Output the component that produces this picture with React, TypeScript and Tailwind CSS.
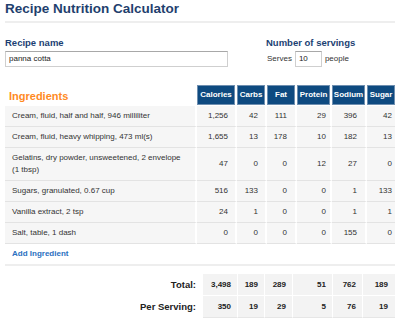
const cols = [
  { label: "Calories", pr: "pr-[7px]" },
  { label: "Carbs", pr: "pr-[7px]" },
  { label: "Fat", pr: "pr-[8px]" },
  { label: "Protein", pr: "pr-[4px]" },
  { label: "Sodium", pr: "pr-[8px]" },
  { label: "Sugar", pr: "pr-[3px]" },
];

const ingredients = [
  { name: "Cream, fluid, half and half, 946 milliliter", values: ["1,256", "42", "111", "29", "396", "42"] },
  { name: "Cream, fluid, heavy whipping, 473 ml(s)", values: ["1,655", "13", "178", "10", "182", "13"] },
  { name: "Gelatins, dry powder, unsweetened, 2 envelope (1 tbsp)", values: ["47", "0", "0", "12", "27", "0"] },
  { name: "Sugars, granulated, 0.67 cup", values: ["516", "133", "0", "0", "1", "133"] },
  { name: "Vanilla extract, 2 tsp", values: ["24", "1", "0", "0", "1", "1"] },
  { name: "Salt, table, 1 dash", values: ["0", "0", "0", "0", "155", "0"] },
];

const totals = [
  { label: "Total:", values: ["3,498", "189", "289", "51", "762", "189"] },
  { label: "Per Serving:", values: ["350", "19", "29", "5", "76", "19"] },
];

const totalPads = ["pr-[6px]", "pr-[6px]", "pr-[6px]", "pr-[6px]", "pr-[6px]", "pr-[7px]"];

function Header() {
  return (
    <div className="h-[23px] border-b-2 border-[#eeeeee] pt-[1px]">
      <h1 className="text-[13.5px] leading-[16px] font-bold text-[#1f3f6e]">Recipe Nutrition Calculator</h1>
    </div>
  );
}

function RecipeFields() {
  return (
    <div className="flex mt-[14px]">
      <div className="w-[223px]">
        <label className="block text-[9.5px] leading-[11px] font-bold text-[#1c3f73] mb-[3px]">Recipe name</label>
        <div className="h-[16px] border border-[#cfcfcf] border-t-[#a8a8a8] pl-[3px] text-[8px] leading-[14px] text-[#222]">
          panna cotta
        </div>
      </div>
      <div className="ml-[38px]">
        <label className="block text-[9.5px] leading-[11px] font-bold text-[#1c3f73] mb-[3px]">Number of servings</label>
        <div className="flex items-center h-[16px] text-[8px] text-[#333]">
          <span className="pl-[1px]">Serves</span>
          <div className="ml-[3px] w-[27px] h-[16px] border border-[#cfcfcf] border-t-[#a8a8a8] pl-[3px] text-[8px] leading-[14px] text-[#222]">
            10
          </div>
          <span className="ml-[3px]">people</span>
        </div>
      </div>
    </div>
  );
}

function IngredientsTable() {
  return (
    <table className="mt-[18px] w-[390px] table-fixed border-separate border-spacing-0 text-[8px] leading-[12px] text-[#333]">
      <colgroup>
        <col className="w-[192px]" />
        <col className="w-[40px]" />
        <col className="w-[30px]" />
        <col className="w-[30px]" />
        <col className="w-[35px]" />
        <col className="w-[35px]" />
        <col className="w-[28px]" />
      </colgroup>
      <thead>
        <tr>
          <th className="h-[21px] text-left align-middle pl-[4px] text-[11px] font-bold text-[#ff8a1f] border-r-2 border-white">
            Ingredients
          </th>
          {cols.map((c, i) => (
            <th
              key={c.label}
              className={`h-[21px] bg-[#0e4a80] text-white font-bold text-center align-middle shadow-[inset_0_0_0_1px_#6f8fb0] border-b border-white ${
                i < cols.length - 1 ? "border-r-2" : ""
              }`}
            >
              {c.label}
            </th>
          ))}
        </tr>
      </thead>
      <tbody>
        {ingredients.map((row) => (
          <tr key={row.name}>
            <td className="bg-[#f6f6f6] pl-[7px] pr-[8px] py-[4px] border-b border-[#e3e3e3] border-r-2 border-r-white align-middle">
              {row.name}
            </td>
            {row.values.map((v, i) => (
              <td
                key={i}
                className={`bg-[#f6f6f6] text-right py-[4px] border-b border-[#e3e3e3] align-middle ${cols[i].pr} ${
                  i < row.values.length - 1 ? "border-r-2 border-r-white" : ""
                }`}
              >
                {v}
              </td>
            ))}
          </tr>
        ))}
        <tr>
          <td colSpan={7} className="h-[22px] pl-[7px] border-b-2 border-[#eeeeee] align-middle">
            <a className="font-bold text-[#2a6fc0] cursor-pointer">Add Ingredient</a>
          </td>
        </tr>
      </tbody>
    </table>
  );
}

function Totals() {
  return (
    <table className="mt-[8px] w-[390px] table-fixed border-separate border-spacing-0 text-[#222]">
      <colgroup>
        <col className="w-[191px]" />
        <col className="w-[7px]" />
        <col className="w-[35px]" />
        <col className="w-[27px]" />
        <col className="w-[28px]" />
        <col className="w-[40px]" />
        <col className="w-[30px]" />
        <col className="w-[32px]" />
      </colgroup>
      <tbody>
        {totals.map((row, r) => (
          <tr key={row.label}>
            <td className="h-[22px] text-right text-[9.5px] font-bold align-middle">{row.label}</td>
            <td />
            {row.values.map((v, i) => (
              <td
                key={i}
                className={`h-[22px] bg-[#f3f3f3] text-right text-[8px] font-bold align-middle ${totalPads[i]} ${
                  r === 0 ? "border-b border-white" : "border-b border-[#e6e6e6]"
                } ${i < row.values.length - 1 ? "border-r border-r-white" : ""}`}
              >
                {v}
              </td>
            ))}
          </tr>
        ))}
      </tbody>
    </table>
  );
}

export default function App() {
  return (
    <div className="w-[400px] h-[323px] overflow-hidden bg-white px-[5px] font-['Liberation_Sans',Arial,sans-serif]">
      <Header />
      <RecipeFields />
      <IngredientsTable />
      <Totals />
    </div>
  );
}
